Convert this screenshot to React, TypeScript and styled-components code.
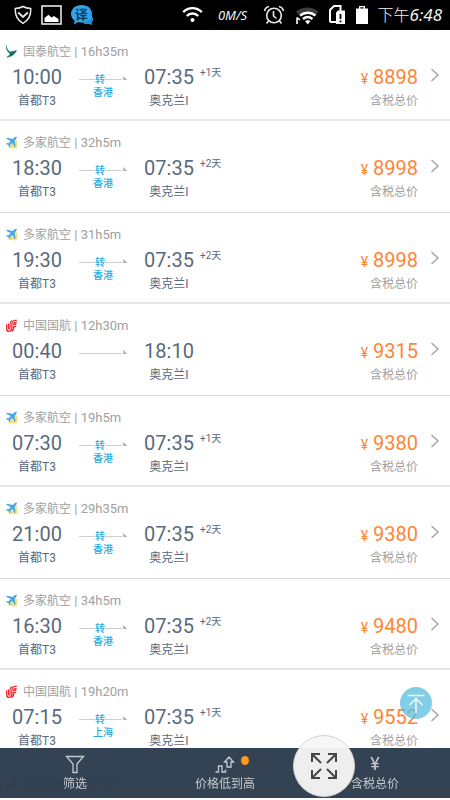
import React from 'react';
import styled, { createGlobalStyle } from 'styled-components';

const Global = createGlobalStyle`
  * { box-sizing: border-box; }
  html, body { margin: 0; padding: 0; background: #fff; }
  body { font-family: Roboto, "Noto Sans CJK SC", sans-serif; color: #5a6a7e; }
  button { border: 0; padding: 0; margin: 0; font: inherit; cursor: pointer; }
`;

const Screen = styled.div`
  height: 100vh;
  overflow: hidden;
  display: flex;
  flex-direction: column;
`;

const StatusBar = styled.header`
  flex: none;
  height: 30px;
  padding: 0 8px 0 14px;
  display: flex;
  align-items: center;
  justify-content: space-between;
  background: #000;
  color: #f2f2f2;
`;

const StatusGroup = styled.div<{ $gap: number }>`
  display: flex;
  align-items: center;
  gap: ${(p) => p.$gap}px;
  svg { display: block; }
`;

const Speed = styled.span`
  font: italic 13px/20px "Noto Sans", sans-serif;
  width: 40px;
  text-align: center;
`;

const Clock = styled.time`
  font: italic 17px/24px "Noto Sans", "Noto Sans CJK SC", sans-serif;
  white-space: nowrap;
  span { font-size: 16px; font-style: normal; font-weight: 300; }
`;

const List = styled.ul`
  list-style: none;
  margin: 0;
  padding: 0;
  flex: 1;
  min-height: 0;
`;

const Item = styled.li`
  padding: 14px 0 10px;
  border-bottom: 2px solid #e6e6e6;
  &:nth-child(even) {
    padding-bottom: 12px;
    border-bottom: 1px solid #d8d8d8;
  }
`;

const FlightLink = styled.a`
  display: block;
  padding: 0 10px 0 6px;
  color: inherit;
  text-decoration: none;
`;

const Title = styled.div`
  display: flex;
  align-items: center;
  height: 16px;
  margin-bottom: 5px;
  font-size: 12px;
  line-height: 16px;
  color: #a0a0a0;
  svg { flex: none; margin-right: 5px; }
`;

const Duration = styled.span`
  font-size: 13px;
  white-space: pre;
`;

const Trip = styled.div`
  display: flex;
  align-items: flex-start;
`;

const Stop = styled.div`
  flex: none;
  width: 62px;
  text-align: center;
`;

const Time = styled.div`
  font-size: 20px;
  line-height: 24px;
`;

const Place = styled.div`
  margin-top: 4px;
  font-size: 12px;
  line-height: 16px;
`;

const Route = styled.div`
  flex: none;
  width: 48px;
  margin: 0 11px;
  padding-top: 8px;
  color: #2ba9e1;
  font-size: 10px;
  font-weight: 500;
  line-height: 13px;
  text-align: center;
`;

const Line = styled.div`
  display: flex;
  align-items: center;
  height: 13px;
  svg { flex: none; display: block; }
`;

const Rule = styled.span<{ $grow?: boolean }>`
  flex: ${(p) => (p.$grow ? '1' : '0 0 16px')};
  height: 1px;
  background: #cfcfcf;
`;

const Days = styled.span`
  flex: 1;
  padding-top: 1px;
  font-size: 10px;
  line-height: 14px;
`;

const Fare = styled.div`
  color: #ff8535;
  text-align: right;
`;

const Amount = styled.div`
  display: flex;
  align-items: baseline;
  justify-content: flex-end;
  gap: 5px;
  height: 24px;
  font-size: 20px;
  line-height: 24px;
`;

const Currency = styled.span`
  font-size: 14px;
`;

const Note = styled(Place)`
  color: #a0a0a0;
`;

const Chevron = styled.svg`
  flex: none;
  margin: 3px 0 0 12px;
`;

const TabBar = styled.nav`
  position: fixed;
  left: 0;
  right: 0;
  bottom: 2px;
  display: grid;
  grid-template-columns: repeat(3, 1fr);
  background: rgba(45, 61, 77, 0.97);
`;

const Tab = styled.button`
  display: flex;
  flex-direction: column;
  align-items: center;
  padding: 5px 0;
  background: none;
  color: #c4c9ce;
  font-size: 12px;
  line-height: 18px;
`;

const TabIcon = styled.span`
  display: flex;
  align-items: center;
  justify-content: center;
  height: 22px;
  font-size: 18px;
  position: relative;
`;

const Dot = styled.i`
  position: absolute;
  left: 26px;
  top: 3px;
  width: 8px;
  height: 9px;
  border-radius: 50%;
  background: #ff9a1a;
`;

const RoundButton = styled.button<{ $size: number; $right: number; $bottom: number }>`
  position: fixed;
  right: ${(p) => p.$right}px;
  bottom: ${(p) => p.$bottom}px;
  width: ${(p) => p.$size}px;
  height: ${(p) => p.$size}px;
  display: flex;
  align-items: center;
  justify-content: center;
  border-radius: 50%;
`;

const ExpandButton = styled(RoundButton)`
  background: rgba(246, 246, 246, 0.96);
  border: 1px solid #d2d2d2;
`;

const TopButton = styled(RoundButton)`
  background: rgba(91, 190, 224, 0.76);
`;

type Carrier = 'cathay' | 'multi' | 'airchina';

const names: Record<Carrier, string> = {
  cathay: '国泰航空',
  multi: '多家航空',
  airchina: '中国国航',
};

type Flight = {
  carrier: Carrier;
  duration: string;
  from: string;
  to: string;
  days?: string;
  via?: string;
  price: number;
};

const flights: Flight[] = [
  { carrier: 'cathay', duration: '16h35m', from: '10:00', to: '07:35', days: '+1天', via: '香港', price: 8898 },
  { carrier: 'multi', duration: '32h5m', from: '18:30', to: '07:35', days: '+2天', via: '香港', price: 8998 },
  { carrier: 'multi', duration: '31h5m', from: '19:30', to: '07:35', days: '+2天', via: '香港', price: 8998 },
  { carrier: 'airchina', duration: '12h30m', from: '00:40', to: '18:10', price: 9315 },
  { carrier: 'multi', duration: '19h5m', from: '07:30', to: '07:35', days: '+1天', via: '香港', price: 9380 },
  { carrier: 'multi', duration: '29h35m', from: '21:00', to: '07:35', days: '+2天', via: '香港', price: 9380 },
  { carrier: 'multi', duration: '34h5m', from: '16:30', to: '07:35', days: '+2天', via: '香港', price: 9480 },
  { carrier: 'airchina', duration: '19h20m', from: '07:15', to: '07:35', days: '+1天', via: '上海', price: 9552 },
  { carrier: 'airchina', duration: '19h5m', from: '07:30', to: '07:35', days: '+1天', via: '上海', price: 9552 },
];

function CarrierLogo({ carrier }: { carrier: Carrier }) {
  if (carrier === 'cathay') {
    return (
      <svg width="12" height="14" viewBox="0 0 12 14" aria-hidden="true">
        <path d="M0 0C.6 4 2.200 6.200 4.500 7L10.500 5.500C9 9.200 5 12 .8 12.200C3 11 4 9.800 4 8.600C1.600 7 0 4 0 0Z" fill="#0b6f6c" stroke="#0b6f6c" strokeWidth=".5" />
      </svg>
    );
  }
  if (carrier === 'multi') {
    return (
      <svg width="12" height="14" viewBox="0 0 12 14" aria-hidden="true">
        <path d="M9.500 2.500L11.500 6L11 12L7 12.500L2 11.500L5 8Z" fill="#fadf7c" />
        <path d="M10.600 .8C9.800.4 8.800 1 7.800 2L6.800 2.900L1 1.700L.2 2.700L4.700 5.100L2.800 7.300L.8 7.100L.1 7.900L2.400 9.100L3.500 11.300L4.300 10.500L4.200 8.700L6.400 6.800L8.700 11.100L9.600 10.300L8.500 4.700L9.500 3.600C10.500 2.500 11.200 1.500 10.600.8Z" fill="#42a8ea" />
      </svg>
    );
  }
  return (
    <svg width="12" height="14" viewBox="0 0 12 14" fill="none" stroke="#ee2630" aria-hidden="true">
      <path d="M10.800 1.400C7.800.9 5.800 2.200 5.900 4.800L6 8.500C6 10.800 4.800 12.300 2.800 12.400C1.300 12.300.6 11 .7 9.200V5.200" strokeWidth="1.300" />
      <path d="M2.500 4.400V9C2.500 10.600 4 10.600 4.100 9V4.200C4.200 2.700 4.800 2 5.900 1.600" strokeWidth="1.100" />
      <path d="M10.700 3.600C8.600 3.300 7.700 4 7.800 5.500L10.300 5.200M10 7.300L7.800 7.500C8 9.600 7.200 11.300 5.800 12.400" strokeWidth="1.300" />
    </svg>
  );
}

function FlightRow({ flight }: { flight: Flight }) {
  return (
    <Item>
      <FlightLink href="#flight">
        <Title>
          <CarrierLogo carrier={flight.carrier} />
          {names[flight.carrier]}
          <Duration> | {flight.duration}</Duration>
        </Title>
        <Trip>
          <Stop>
            <Time>{flight.from}</Time>
            <Place>首都T3</Place>
          </Stop>
          <Route>
            <Line>
              <Rule />
              {flight.via && <span>转</span>}
              <Rule $grow />
              <svg width="5" height="9" viewBox="0 0 5 9" aria-hidden="true">
                <path d="M1 1L5 4.500V5H1Z" fill="#b5b5b5" />
              </svg>
            </Line>
            {flight.via}
          </Route>
          <Stop>
            <Time>{flight.to}</Time>
            <Place>奥克兰I</Place>
          </Stop>
          <Days>{flight.days}</Days>
          <Fare>
            <Amount>
              <Currency>¥</Currency>
              {flight.price}
            </Amount>
            <Note>含税总价</Note>
          </Fare>
          <Chevron width="10" height="14" viewBox="0 0 10 14" fill="none" stroke="#a3a3a3" strokeWidth="1.400" aria-hidden="true">
            <path d="M1.500 1L8 7L1.500 13" />
          </Chevron>
        </Trip>
      </FlightLink>
    </Item>
  );
}

export default function App() {
  return (
    <Screen>
      <Global />
      <StatusBar>
        <StatusGroup $gap={9}>
          <svg width="18" height="20" viewBox="0 0 18 20" fill="none" stroke="#e8e8e8" strokeWidth="1.500">
            <path d="M9 1.500C11.500 3 14 3.400 16.800 3.600C17 10.500 14.500 15.500 9 18.300C3.500 15.500 1 10.500 1.200 3.600C4 3.400 6.500 3 9 1.500Z" />
            <path d="M4.200 7.500L9 12L13.800 7.500" strokeWidth="2" />
          </svg>
          <svg width="21" height="20" viewBox="0 0 21 20">
            <rect x="1" y="1" width="19" height="18" fill="none" stroke="#e8e8e8" strokeWidth="1.600" />
            <path d="M3.500 17V13L7.500 9.800L10.500 12.500L13 11L17.500 14V17Z" fill="#fff" />
          </svg>
          <svg width="23" height="21" viewBox="0 0 23 21">
            <path d="M18 9C23 11 23 16 20.500 17.500L21.500 20L17.500 19C15 19.600 12 18.500 11 17Z" fill="#2292d8" />
            <path d="M10.500 0C17 0 21 4 21 8.800C21 14 16.500 17.500 10.500 17.500C9 17.500 8 17.300 7 17L3 19.500L3.500 15.500C1 13.500 0 11.500 0 8.800C0 4 4.500 0 10.500 0Z" fill="#30a5ed" />
            <text x="10.500" y="13.500" textAnchor="middle" fontSize="13" fontWeight="700" fontFamily="Noto Sans CJK SC, sans-serif" fill="#123c58">译</text>
          </svg>
        </StatusGroup>
        <StatusGroup $gap={10}>
          <svg width="21" height="18" viewBox="0 0 21 18" fill="none" stroke="#fff" strokeWidth="2.400">
            <path d="M1.200 6.200C6.500.8 14.500.8 19.800 6.200M4.800 10C8 6.700 13 6.700 16.200 10" />
            <circle cx="10.500" cy="14" r="2" fill="#fff" stroke="none" />
          </svg>
          <Speed>0M/S</Speed>
          <svg width="22" height="20" viewBox="0 0 22 20" fill="none" stroke="#e8e8e8" strokeWidth="1.600">
            <circle cx="11" cy="10.500" r="7.300" />
            <path d="M10.500 6V11L13.500 13.500M5.500 16L3.500 18.500M16.500 16L18.500 18.500M1.500 6C2 3.500 3.500 2 6 1.500M20.500 6C20 3.500 18.500 2 16 1.500" />
          </svg>
          <svg width="24" height="19" viewBox="0 0 24 19">
            <path d="M1 5.500C7.500.2 17 .2 23.500 5.500L20.800 8.800C15.500 5 9 5 3.700 8.800Z" fill="#3c3c3c" />
            <path d="M5 9.500C9.500 5.800 16 5.800 20.500 9.500M8 13C11 10.600 14.500 10.600 17.500 13" fill="none" stroke="#fff" strokeWidth="2.400" />
            <path d="M10 15C11.500 14 14 14 15.500 15L12.700 18.500Z" fill="#fff" />
            <path d="M2 11.500V18M2 11.500L5 14" stroke="#fff" strokeWidth="1.600" />
          </svg>
          <svg width="17" height="20" viewBox="0 0 17 20">
            <path d="M1 17V5L5 1H11.500V6M1 17H7" fill="none" stroke="#fff" strokeWidth="2" />
            <path d="M7 7.500L9 5.500H16V19H7Z" fill="#fff" />
            <path d="M11.500 9V14M11.500 15.500V17.300" stroke="#000" strokeWidth="1.800" />
          </svg>
          <svg width="12" height="20" viewBox="0 0 12 20">
            <path d="M0 3.500H3V1H9V3.500H12V19H0Z" fill="#fff" />
            <path d="M4.200 2.300H7.800V3.500H4.200Z" fill="#000" />
          </svg>
          <Clock><span>下午</span>6:48</Clock>
        </StatusGroup>
      </StatusBar>

      <List>
        {flights.map((flight, i) => (
          <FlightRow key={i} flight={flight} />
        ))}
      </List>

      <TabBar>
        <Tab type="button">
          <TabIcon>
            <svg width="20" height="19" viewBox="0 0 20 19" fill="none" stroke="currentColor" strokeWidth="1.300">
              <path d="M1.500 1.500H18.500L12 9V17.500H8V9Z" />
            </svg>
          </TabIcon>
          筛选
        </Tab>
        <Tab type="button">
          <TabIcon>
            <svg width="20" height="20" viewBox="0 0 20 20" fill="none" stroke="currentColor" strokeWidth="1.300">
              <path d="M.5 18H3.500V12H7V18H10.500V15.500" />
              <path d="M14 3L18.500 8H16V13H12V8H9.500Z" />
            </svg>
            <Dot />
          </TabIcon>
          价格低到高
        </Tab>
        <Tab type="button">
          <TabIcon>¥</TabIcon>
          含税总价
        </Tab>
      </TabBar>

      <TopButton type="button" aria-label="返回顶部" $size={32} $right={18} $bottom={81}>
        <svg width="20" height="22" viewBox="0 0 20 22" fill="none" stroke="#eefaff" strokeWidth="1.500">
          <path d="M1.500 3.500H18.500M10 21V6.500M3.500 13L10 6.500L16.500 13" />
        </svg>
      </TopButton>
      <ExpandButton type="button" aria-label="展开" $size={62} $right={95} $bottom={3}>
        <svg width="28" height="28" viewBox="0 0 28 28" fill="none" stroke="#474747" strokeWidth="2">
          <path d="M2 10V2H10M2 2L11 11M18 2H26V10M26 2L17 11M2 18V26H10M2 26L11 17M18 26H26V18M26 26L17 17" />
        </svg>
      </ExpandButton>
    </Screen>
  );
}
